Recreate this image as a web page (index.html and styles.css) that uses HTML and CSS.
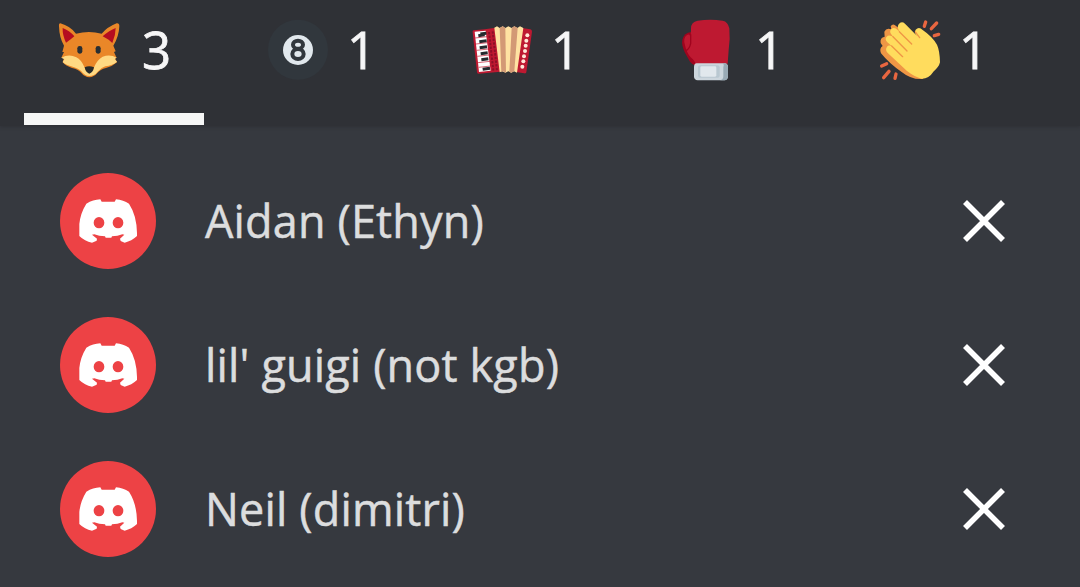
FILE: index.html
```html
<!DOCTYPE html>
<html lang="en">
<head>
<meta charset="utf-8">
<title>Reactions</title>
<link rel="stylesheet" href="styles.css">
</head>
<body>
<svg class="defs" width="0" height="0" aria-hidden="true">
  <symbol id="logo" viewBox="0 0 174 132">
    <path fill="#fff" d="M64 1 Q42 2 22 14 Q4 43 1 75 L1 111 Q17 127 39 131 L53 125 L54 119 L39 107 L46 106 Q60 112 78 112 L80 116 H97 L99 112 Q116 112 130 106 L136 107 L123 119 L125 126 L137 131 Q158 126 174 111 Q175 52 150 14 Q133 3 111 1 L107 8 L68 8Z"/>
    <ellipse cx="60" cy="71" rx="16" ry="17" fill="#ed4245"/>
    <ellipse cx="117" cy="71" rx="16" ry="17" fill="#ed4245"/>
  </symbol>
  <symbol id="close" viewBox="0 0 42 42">
    <path d="M2 2 40 40M40 2 2 40" stroke="#fff" stroke-width="5.6" fill="none"/>
  </symbol>
</svg>
<nav class="tabs">
  <div class="tab active">
    <svg class="emoji" viewBox="30 29 180 180">
      <path fill="#ea8728" d="M31 39 Q26 39 27 48 Q28 83 42 106 L37 125 L42 125 L34 142 L42 143 L38 156 Q47 167 66 173 Q86 177 95 189 Q104 200 118 201 Q132 200 141 189 Q151 177 168 173 Q188 168 201 156 L195 144 L200 143 L192 125 L197 123 L190 106 Q207 78 208 47 Q208 38 200 39 Q172 50 155 70 Q117 60 78 70 Q60 47 31 39Z"/>
      <path fill="#b50d20" d="M38 53 Q58 60 73 78 L63 86 L48 97 Q37 74 38 53ZM197 53 Q178 60 158 78 L176 88 L187 98 Q197 75 197 53Z"/>
      <path fill="#ffd983" d="M34 142 Q57 129 79 141 Q94 149 102 168 Q108 184 118 187 Q128 184 133 169 Q142 148 158 139 Q180 130 200 142 L194 146 L201 154 Q188 165 166 168 Q151 173 143 184 Q133 197 118 197 Q104 197 94 183 Q86 174 68 169 Q48 164 38 155 L43 147Z"/>
      <path fill="#272b2b" d="M104 171 Q117 164 132 171 Q129 187 118 190 Q107 187 104 171Z"/>
      <rect x="82" y="107" width="15" height="23" rx="7" fill="#292f33"/><rect x="137" y="107" width="15" height="23" rx="7" fill="#292f33"/>
    </svg>
    <span class="count">3</span>
  </div>
  <div class="tab">
    <svg class="emoji" viewBox="24 29 180 180">
      <circle cx="114" cy="118" r="90" fill="#31373d"/>
      <circle cx="114" cy="119" r="45" fill="#e1e8ed"/>
      <g fill="none" stroke="#31373d" stroke-width="12"><ellipse cx="114" cy="103" rx="15" ry="12"/><ellipse cx="114" cy="131" rx="17" ry="15"/></g>
    </svg>
    <span class="count">1</span>
  </div>
  <div class="tab">
    <svg class="emoji" viewBox="21 29 180 180">
      <path fill="#be1931" d="M26 60 Q60 57 92 52 L106 184 L41 190 Q37 191 36 186 L23 66Q22 61 26 60ZM171 53 L196 57 Q201 58 201 64 L184 186 Q183 190 178 189 L153 185Z"/>
      <path fill="#fff" d="M29 64 L62 61 L77 181 L42 185Z"/>
      <path fill="none" stroke="#242a2e" stroke-width="9" d="M40 76 59 73M46 71 64 69M43 94 65 91M44 112 66 109M47 130 68 127M49 148 70 145M53 177 75 174"/>
      <path fill="none" stroke="#be1931" stroke-width="2" d="M30 83 66 79M33 101 68 97M35 120 70 116M37 138 72 134M39 157 75 153M41 171 77 167"/>
      <path fill="none" stroke="#8c1027" stroke-width="6" stroke-dasharray="7 4" d="M72 65 85 181M83 63 96 181"/>
      <path fill="#ffe2a2" d="M88 52 96 48 104 53 113 48 121 53 130 48 140 53 148 48 157 53 165 48 175 53 156 187 147 183 139 187 130 183 121 187 112 183 104 186Z"/>
      <path fill="#d39975" d="M104 53 113 48 121 53 123 187 114 183 109 186ZM140 53 148 48 158 53 148 183 138 187 133 184Z"/>
      <g fill="#ffe8d8"><circle cx="187" cy="75" r="6"/><circle cx="184" cy="91" r="6"/><circle cx="182" cy="106" r="6"/><circle cx="180" cy="122" r="6"/><circle cx="177" cy="138" r="6"/><circle cx="175" cy="153" r="6"/><circle cx="172" cy="169" r="6"/></g>
    </svg>
    <span class="count">1</span>
  </div>
  <div class="tab">
    <svg class="emoji" viewBox="18 29 180 180">
      <path fill="#a0041e" d="M64 65 Q42 67 37 89 Q34 104 45 127 L60 154 Q67 164 78 166 L89 110Z"/>
      <path fill="#be1931" d="M63 54 Q63 35 83 31 Q121 26 158 31 Q174 34 178 54 Q181 86 176 119 L173 160 L77 162 Q75 151 62 141 Q50 128 45 105 Q38 83 51 74 Q61 67 62 87Z"/>
      <path d="M62 72V99Q59 115 48 121" fill="none" stroke="#a0041e" stroke-width="4"/>
      <path fill="#ccd6dd" d="M80 159H164Q174 160 174 171V197Q174 209 163 210H83Q72 209 72 198V170Q72 160 80 159Z"/>
      <path fill="#99aab5" d="M159 159H164Q174 160 174 171V197Q174 209 163 210H150Q160 208 160 198V171Q164 165 159 159Z"/>
      <rect x="84" y="165" width="65" height="37" rx="6" fill="#b9c8d1"/><rect x="91" y="168" width="48" height="31" rx="4" fill="#e1e8ed"/>
    </svg>
    <span class="count">1</span>
  </div>
  <div class="tab">
    <svg class="emoji" viewBox="30 29 180 180">
      <path fill="#ef9645" d="M79 48 Q69 37 62 48 L64 57 Q49 51 43 64 L44 79 Q29 82 32 98 L38 107 Q27 114 33 129 Q58 160 95 185 Q125 209 158 206 L190 169 L127 81Z"/>
      <path fill="#ffdc5d" d="M85 43 Q94 30 105 40 L151 87 Q129 67 137 58 Q147 48 158 59 Q186 78 201 103 Q209 120 210 156 Q207 170 190 184 Q178 204 155 205 Q134 200 111 182 L54 129 Q44 119 51 109 Q56 102 66 108 L52 96 Q43 86 50 79 Q58 71 72 82 L66 75 Q56 64 64 56 Q73 49 83 59 L91 66 Q80 53 85 43Z"/>
      <path fill="none" stroke="#ef9645" stroke-width="4" stroke-linecap="round" d="M88 64 125 101M69 79 111 122M65 107 98 139M136 65 149 82"/>
      <path fill="none" stroke="#e86640" stroke-width="10" stroke-linecap="round" d="M167 35 163 48M200 38 184 55M206 72 193 76M50 160 35 167M57 183 41 202M78 191 75 204"/>
    </svg>
    <span class="count">1</span>
  </div>
</nav>
<main class="list">
  <div class="row"><span class="avatar"><svg><use href="#logo"/></svg></span><span class="name">Aidan (Ethyn)</span><svg class="close"><use href="#close"/></svg></div>
  <div class="row"><span class="avatar"><svg><use href="#logo"/></svg></span><span class="name">lil' guigi (not kgb)</span><svg class="close"><use href="#close"/></svg></div>
  <div class="row"><span class="avatar"><svg><use href="#logo"/></svg></span><span class="name">Neil (dimitri)</span><svg class="close"><use href="#close"/></svg></div>
</main>
</body>
</html>
```
FILE: styles.css
```css
* { box-sizing: border-box; }
body { margin: 0; width: 1080px; height: 587px; overflow: hidden; background: #36393f; font-family: "Open Sans", "Noto Sans", sans-serif; }
.defs { display: block; width: 0; height: 0; }
.tabs { display: flex; gap: 28px; height: 126px; padding: 0 24px; background: #2f3136; box-shadow: 0 1px 3px #2f3136; }
.tab { display: flex; gap: 19px; width: 176px; height: 125px; padding: 20px 0 0 36px; border-bottom: 12px solid transparent; flex: none; }
.tab.active { gap: 22px; width: 180px; border-color: #f6f7f6; }
.emoji { width: 60px; height: 60px; overflow: visible; flex: none; }
.count { color: #f6f6f7; font-size: 51px; line-height: 58px; -webkit-text-stroke: 0.8px #f6f6f7; }
.list { padding-top: 23px; }
.row { display: flex; align-items: center; height: 144px; padding: 0 75px 0 60px; }
.avatar { display: flex; align-items: center; justify-content: center; width: 96px; height: 96px; border-radius: 50%; background: #ed4245; }
.avatar svg { width: 58px; height: 44px; }
.name { flex: 1; margin-left: 49px; color: #dcddde; font-size: 45px; line-height: 60px; letter-spacing: 0.15px; white-space: nowrap; -webkit-text-stroke: 0.5px #dcddde; }
.close { width: 42px; height: 42px; }
```
